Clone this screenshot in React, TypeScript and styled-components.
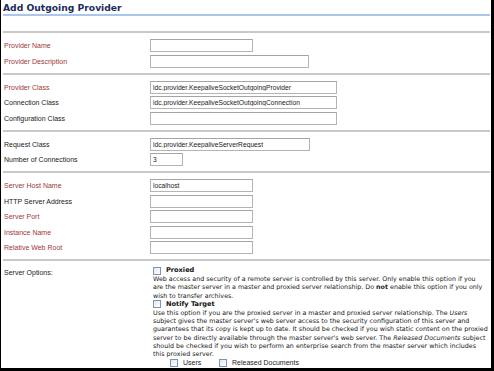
import React from 'react';
import styled, { createGlobalStyle } from 'styled-components';

const GlobalStyle = createGlobalStyle`
  html, body {
    margin: 0;
    padding: 0;
    background: #ffffff;
  }
  * {
    box-sizing: border-box;
  }
`;

const Frame = styled.div`
  width: 494px;
  height: 371px;
  border-left: 1px solid #000;
  border-right: 3px solid #000;
  border-bottom: 3px solid #000;
  padding: 0 1px 0 2px;
  background: #fff;
  overflow: hidden;
  font-family: "Liberation Sans", Arial, sans-serif;
`;

const Title = styled.h1`
  margin: 0;
  padding-top: 2px;
  height: 16px;
  line-height: 12px;
  font-family: "DejaVu Sans", Verdana, sans-serif;
  font-size: 9.2px;
  font-weight: bold;
  color: #1c2b5c;
  border-bottom: 2px solid #aac6e8;
`;

const Spacer = styled.div`
  height: 15px;
`;

const Section = styled.div<{ $last?: boolean }>`
  border-top: 2px solid #c9c9c9;
  padding: ${p => (p.$last ? 5 : 6)}px 0 ${p => (p.$last ? 0 : 5)}px;
  display: grid;
  grid-template-columns: 147px 1fr;
  row-gap: 2.5px;
  line-height: 13px;
`;

const Label = styled.label<{ $required?: boolean }>`
  padding-left: 1px;
  font-size: 7px;
  line-height: 13px;
  height: 13px;
  color: ${p => (p.$required ? '#9c3838' : '#1a1a1a')};
`;

const Cell = styled.div`
  display: flex;
  align-items: center;
  height: 13px;
`;

const Input = styled.input<{ $w: number }>`
  display: block;
  width: ${p => p.$w}px;
  height: 13px;
  margin: 0;
  padding: 0 2px;
  border: 1px solid #b4b4b4;
  border-top-color: #a4a4a4;
  font-family: "Liberation Sans", Arial, sans-serif;
  font-size: 6.7px;
  color: #222;
  background: #fff;
  outline: none;
`;

const Options = styled.div`
  padding-left: 3px;
  font-family: "DejaVu Sans", Verdana, sans-serif;
  font-size: 6.35px;
  line-height: 8.3px;
  color: #1a1a1a;
`;

const OptionHead = styled.div`
  display: flex;
  align-items: center;
  gap: 5px;
  height: 9px;
  font-size: 6.6px;
  font-weight: bold;
  color: #111;
`;

const Box = styled.span`
  display: inline-block;
  width: 8px;
  height: 8px;
  border: 1px solid #7d95b8;
  background: linear-gradient(135deg, #e3e7ee, #ffffff);
  flex: none;
`;

const Desc = styled.p`
  margin: 0;
  line-height: 8.3px;
  white-space: nowrap;
`;

const SubChoices = styled.div`
  display: flex;
  align-items: center;
  padding-left: 17px;
  height: 9px;
  font-family: "Liberation Sans", Arial, sans-serif;
  font-size: 7px;
  color: #222;
`;

const Choice = styled.span<{ $w: number }>`
  display: flex;
  align-items: center;
  gap: 5px;
  width: ${p => p.$w}px;
`;

type Field = { label: string; required?: boolean; width: number; value?: string };

const sections: Field[][] = [
  [
    { label: 'Provider Name', required: true, width: 103 },
    { label: 'Provider Description', required: true, width: 159 },
  ],
  [
    { label: 'Provider Class', required: true, width: 187, value: 'idc.provider.KeepaliveSocketOutgoingProvider' },
    { label: 'Connection Class', width: 187, value: 'idc.provider.KeepaliveSocketOutgoingConnection' },
    { label: 'Configuration Class', width: 187 },
  ],
  [
    { label: 'Request Class', width: 160, value: 'idc.provider.KeepaliveServerRequest' },
    { label: 'Number of Connections', width: 33, value: '3' },
  ],
  [
    { label: 'Server Host Name', required: true, width: 103, value: 'localhost' },
    { label: 'HTTP Server Address', width: 103 },
    { label: 'Server Port', required: true, width: 103 },
    { label: 'Instance Name', required: true, width: 103 },
    { label: 'Relative Web Root', required: true, width: 103 },
  ],
];

export default function App() {
  return (
    <>
      <GlobalStyle />
      <Frame>
        <Title>Add Outgoing Provider</Title>
        <Spacer />
        {sections.map((fields, i) => (
          <Section key={i}>
            {fields.map(f => (
              <React.Fragment key={f.label}>
                <Label $required={f.required}>{f.label}</Label>
                <Cell>
                  <Input $w={f.width} defaultValue={f.value ?? ''} />
                </Cell>
              </React.Fragment>
            ))}
          </Section>
        ))}
        <Section $last>
          <Label>Server Options:</Label>
          <Options>
            <OptionHead>
              <Box /> Proxied
            </OptionHead>
            <Desc>
              Web access and security of a remote server is controlled by this server. Only enable this option if you
              <br />
              are the master server in a master and proxied server relationship. Do <b>not</b> enable this option if you only
              <br />
              wish to transfer archives.
            </Desc>
            <OptionHead>
              <Box /> Notify Target
            </OptionHead>
            <Desc>
              Use this option if you are the proxied server in a master and proxied server relationship. The <i>Users</i>
              <br />
              subject gives the master server's web server access to the security configuration of this server and
              <br />
              guarantees that its copy is kept up to date. It should be checked if you wish static content on the proxied
              <br />
              server to be directly available through the master server's web server. The <i>Released Documents</i> subject
              <br />
              should be checked if you wish to perform an enterprise search from the master server which includes
              <br />
              this proxied server.
            </Desc>
            <SubChoices>
              <Choice $w={49}>
                <Box /> Users
              </Choice>
              <Choice $w={100}>
                <Box /> Released Documents
              </Choice>
            </SubChoices>
          </Options>
        </Section>
      </Frame>
    </>
  );
}
